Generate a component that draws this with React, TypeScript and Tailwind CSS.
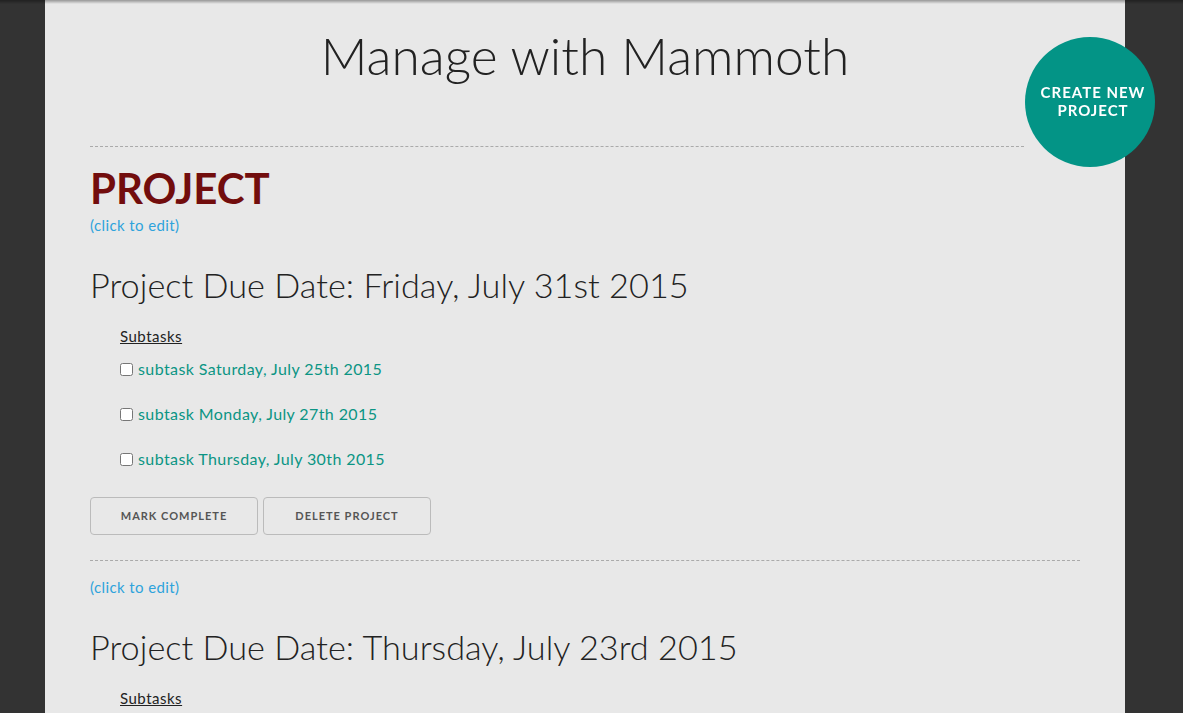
import React from 'react'

interface Project {
  title: string
  due: string
  subtasks: string[]
}

const projects: Project[] = [
  {
    title: 'PROJECT',
    due: 'Friday, July 31st 2015',
    subtasks: ['Saturday, July 25th 2015', 'Monday, July 27th 2015', 'Thursday, July 30th 2015'],
  },
  {
    title: '',
    due: 'Thursday, July 23rd 2015',
    subtasks: ['Friday, July 17th 2015'],
  },
]

function ProjectCard({ project, first }: { project: Project; first: boolean }) {
  return (
    <div className={first ? 'pt-[18px]' : 'pt-[12px]'}>
      {project.title && (
        <h2 className="text-[42px] leading-[46px] font-bold text-[#720d0d]">{project.title}</h2>
      )}
      <a className="block text-[15px] leading-[20px] tracking-[0.4px] text-[#2ea3dc] mt-[4px] cursor-pointer">(click to edit)</a>
      <h3 className="mt-[28px] text-[34.3px] leading-[44px] font-light text-[#222]">
        Project Due Date: {project.due}
      </h3>
      <div className="pl-[30px] mt-[20px]">
        <p className="text-[15px] leading-[18px] tracking-[0.5px] underline text-[#222]">Subtasks</p>
        <ul className="mt-[14px] flex flex-col gap-[25px]">
          {project.subtasks.map(s => (
            <li key={s} className="flex items-center gap-[5px] h-[20px]">
              <input type="checkbox" className="w-[13px] h-[13px] m-0" />
              <span className="text-[16px] tracking-[0.4px] text-[#0b9584]">subtask {s}</span>
            </li>
          ))}
        </ul>
      </div>
      <div className="flex gap-[5px] mt-[28px]">
        <button className="w-[168px] h-[38px] border border-[#bbb] rounded-[4px] text-[11px] font-bold tracking-[1px] text-[#555]">
          MARK COMPLETE
        </button>
        <button className="w-[168px] h-[38px] border border-[#bbb] rounded-[4px] text-[11px] font-bold tracking-[1px] text-[#555]">
          DELETE PROJECT
        </button>
      </div>
      <div className="mt-[25px] border-t border-dashed border-[#aaa]" />
    </div>
  )
}

export default function App() {
  return (
    <div className="min-h-screen bg-[#333] font-['Lato','Liberation_Sans',sans-serif]">
      <div className="fixed top-0 left-0 right-0 h-[4px] bg-gradient-to-b from-[rgba(0,0,0,0.35)] to-transparent pointer-events-none z-20" />
      <div className="ml-[45px] w-[1080px] min-h-screen bg-[#e8e8e8] px-[45px]">
        <h1 className="pt-[24px] text-center text-[51.5px] leading-[62px] font-light text-[#222]">Manage with Mammoth</h1>
        <div className="mt-[60px] w-[934px] border-t border-dashed border-[#aaa]" />
        {projects.map((p, i) => (
          <ProjectCard key={i} project={p} first={i === 0} />
        ))}
      </div>
      <button className="fixed left-[1025px] top-[37px] w-[130px] h-[130px] rounded-full bg-[#039486] pl-[6px] pb-[2px] text-white text-[15px] leading-[18px] font-bold tracking-[1px] z-10">
        CREATE NEW
        <br />
        PROJECT
      </button>
    </div>
  )
}
